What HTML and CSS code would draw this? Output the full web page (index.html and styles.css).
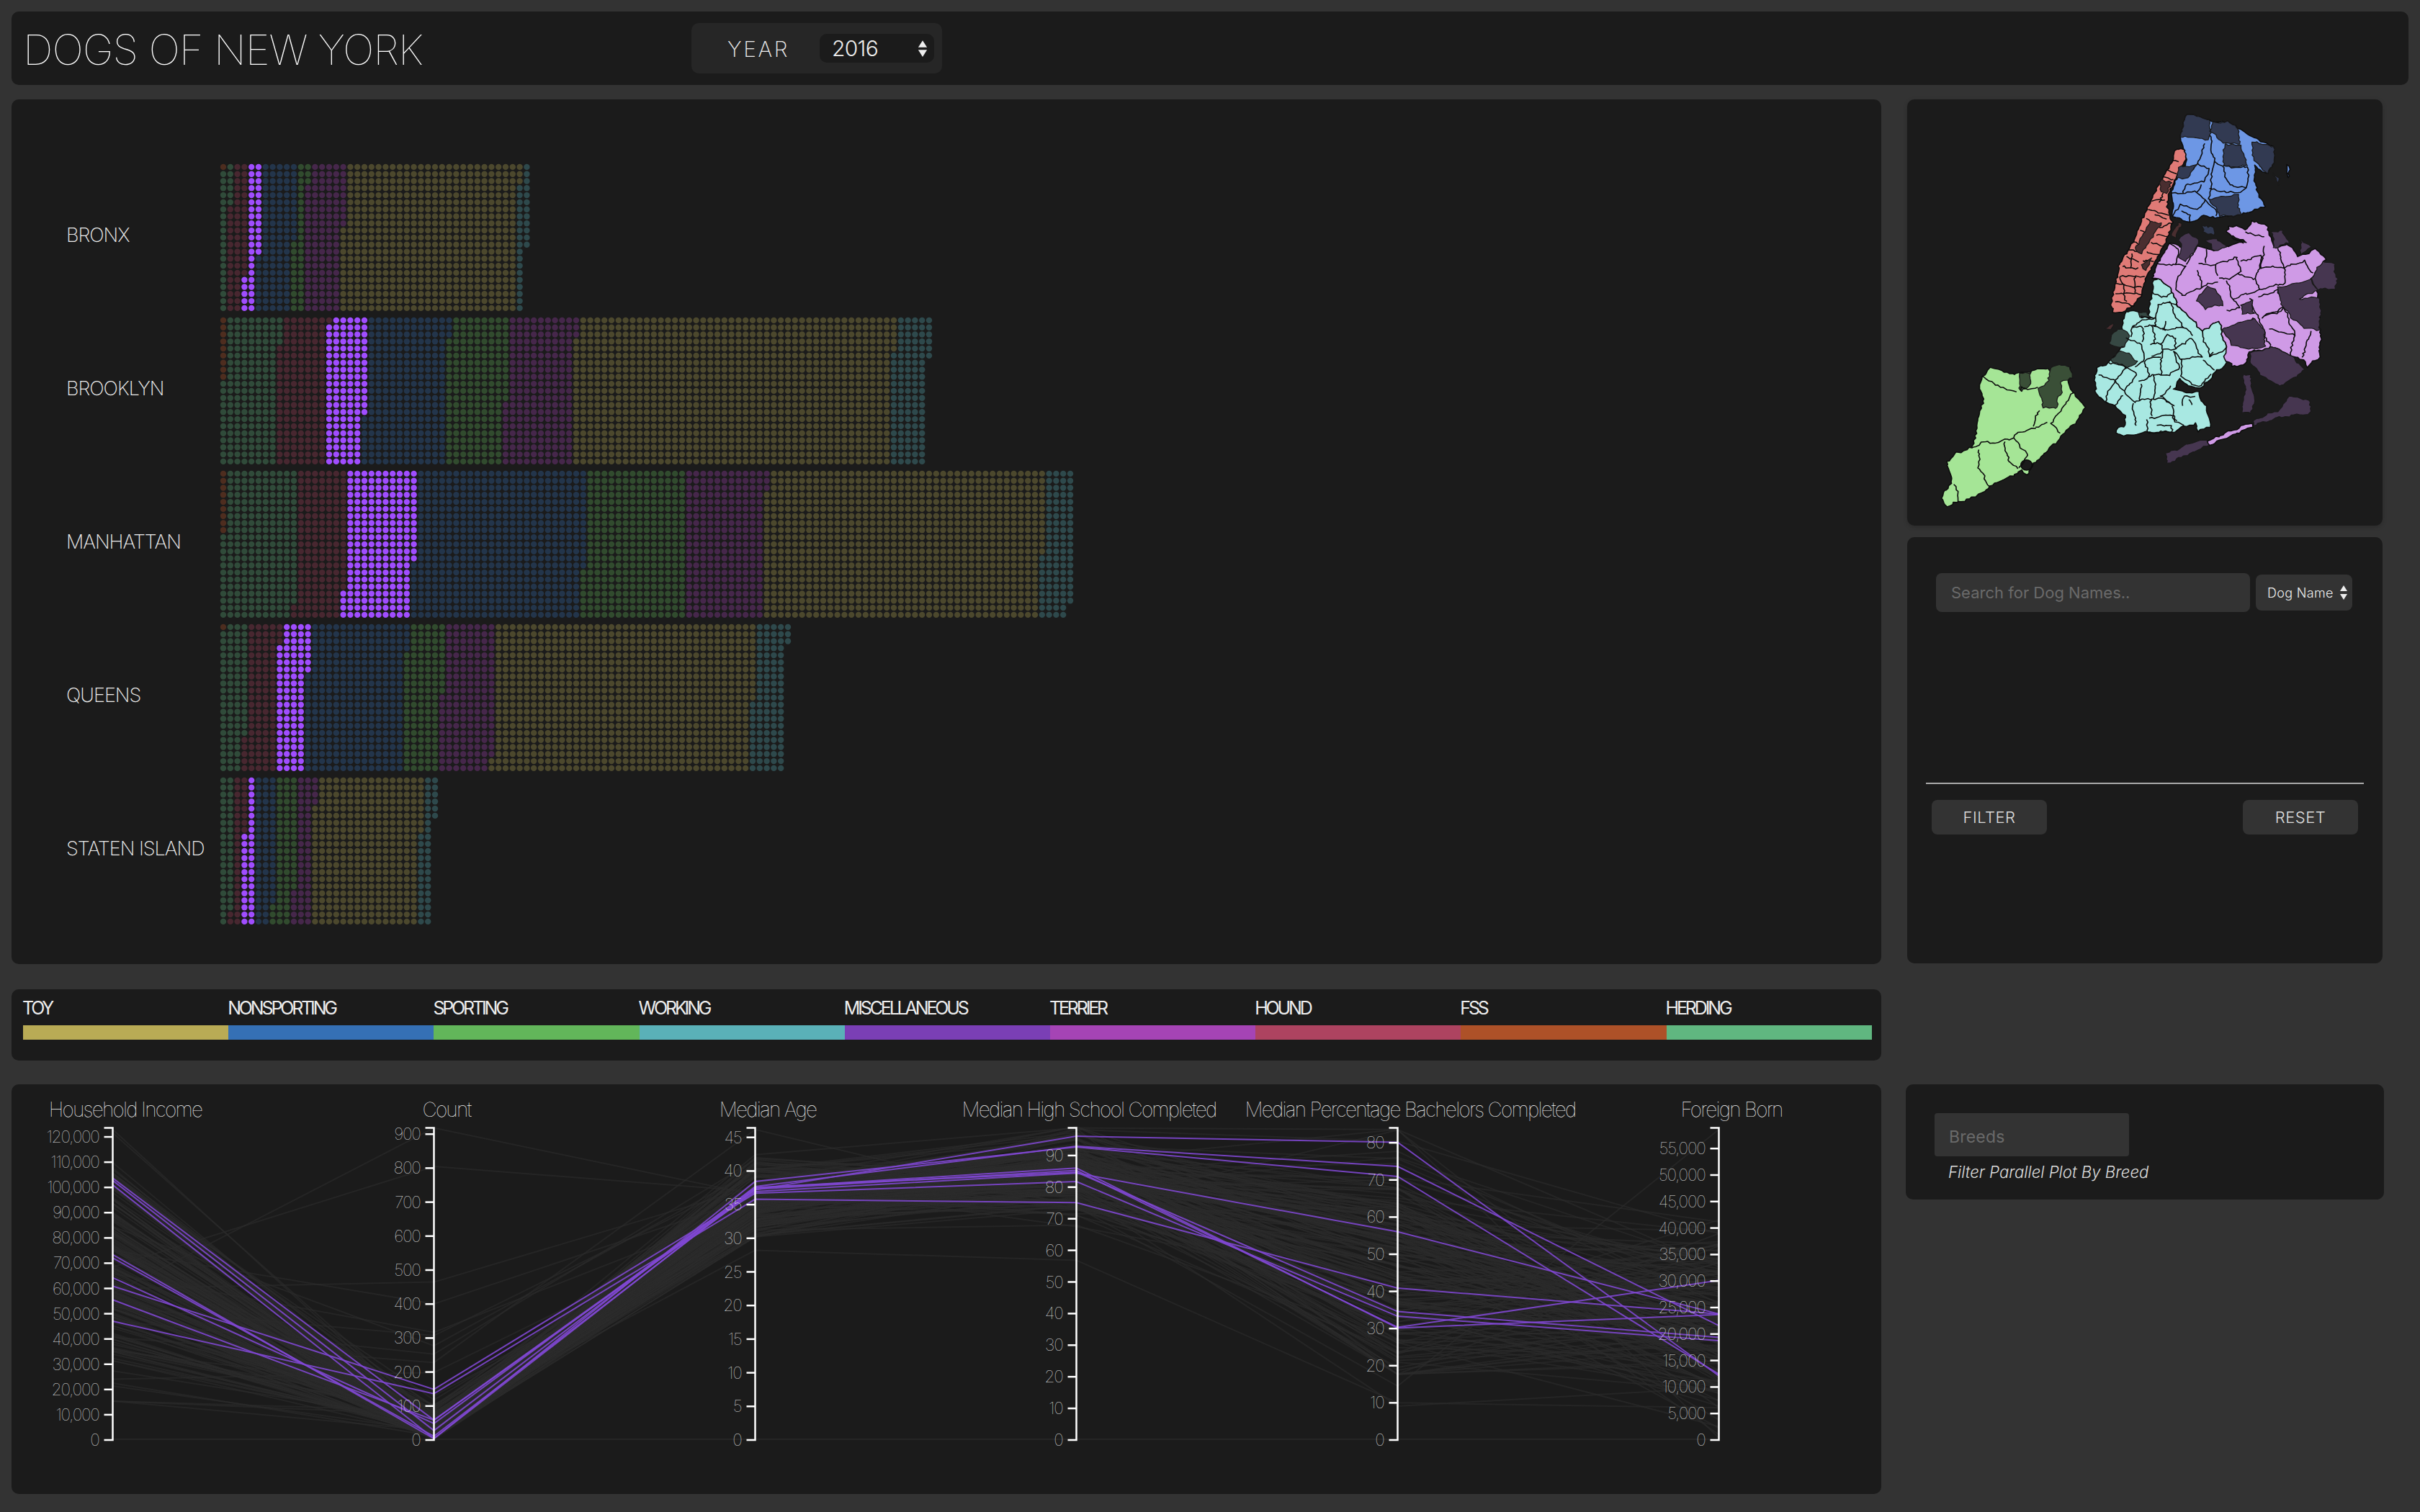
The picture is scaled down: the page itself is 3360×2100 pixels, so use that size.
FILE: index.html
```
<!DOCTYPE html>
<html lang="en">
<head>
<meta charset="utf-8">
<title>Dogs of New York</title>
<link rel="stylesheet" href="styles.css">
</head>
<body>
<header class="panel header">
  <h1 class="title">DOGS OF NEW YORK</h1>
  <div class="year-box">
    <span class="year-label">YEAR</span>
    <div class="select year-select"><span>2016</span>
      <svg class="arrows year-arrows" viewBox="0 0 16 26"><path d="M8 0 15 11H1ZM8 26 1 15H15Z"/></svg>
    </div>
  </div>
</header>
<div class="columns">
  <div class="left">
    <main class="panel dots" id="dots"></main>
    <section class="panel legend" id="legend"></section>
    <section class="panel parallel"><svg id="parallel" class="parallel-svg" viewBox="16 1506 2596 569"></svg></section>
  </div>
  <aside class="right">
    <section class="panel map-panel">
      <svg class="map" viewBox="18 20 1522 1498" preserveAspectRatio="none">
        <g class="map-g" id="map">
          <!-- Staten Island -->
          <path class="si" d="M282 965 300 968 330 975 360 985 410 975 470 965 478 975 510 955 540 960 545 1000 530 1005 548 1050 588 1105 560 1150 520 1190 500 1220 460 1265 420 1300 400 1340 385 1325 340 1350 280 1380 265 1400 215 1425 185 1435 145 1450 128 1420 135 1395 160 1375 155 1335 145 1295 180 1260 225 1245 245 1150 262 1080 250 1030 258 995Z"/>
          <path class="si-d" d="M380 985 412 978 415 1020 385 1050 375 1035ZM480 965 510 952 540 958 545 1000 512 1010 510 1050 495 1075 500 1100 455 1105 440 1040 470 1010Z"/>
          <circle class="hole" cx="400" cy="1305" r="18"/>
          <path class="ln" d="M258 995 300 1025 365 1045M385 1050 380 1035 440 1035M440 1110 425 1165M548 1050 500 1130 480 1160M430 1175 375 1190 360 1210 330 1215 310 1225 265 1225 225 1245M480 1160 510 1195M430 1170 470 1155M245 1250 250 1320 280 1380M330 1225 340 1290 370 1320M360 1210 405 1270 375 1320M170 1375 185 1435"/>
          <!-- Brooklyn -->
          <path class="bk" d="M715 765 755 768 765 785 790 785 800 720 805 655 830 655 865 690 885 745 935 800 960 835 1015 800 1040 900 1040 950 1000 985 985 1010 950 1035 920 1030 890 1005 875 1040 905 1048 950 1050 960 1078 975 1095 990 1170 950 1185 940 1160 905 1170 865 1190 790 1190 710 1205 685 1190 690 1175 720 1165 715 1130 680 1095 650 1085 620 1050 618 1000 630 965 660 945 690 910 715 885 708 825Z"/>
          <path class="bk-d" d="M670 845 705 825 735 850 715 885 690 895 668 880ZM665 940 695 905 725 915 755 945 720 965ZM755 770 785 765 795 785 760 785Z"/>
          <path class="ln" d="M738 850 735 825 765 800 815 785 820 740 865 735 885 745M765 790 815 785 815 815 775 815M740 825 770 815 775 870M775 815 805 815 810 880M810 820 845 830 845 800M838 830 905 820 935 850M860 730 870 770 905 820M715 860 770 880 775 940 745 960M795 880 830 880 835 905 800 925M830 880 850 850 880 860 875 895 835 900M875 895 930 860M870 905 895 930 960 925 930 860M835 905 830 985 790 995 780 935 830 925M870 905 890 960 860 990 830 985M895 930 895 995 950 1030 990 985M965 935 1000 975M1000 910 990 925 1040 895M960 835 990 925M660 945 720 960 685 1010 630 985M720 960 755 990 710 1045 685 1010M685 1010 655 1055 660 1090M710 1045 745 1080 830 1070 870 1100M760 1015 790 995M765 1020 765 1080M810 990 810 1070M708 1060 680 1095M740 1085 750 1170M800 1075 800 1130M790 1140 870 1130 875 1155 905 1165M785 1145 785 1190 865 1188 865 1165 820 1165M865 1100 880 1150M860 1030 830 1065 870 1100M900 1095 905 1065 935 1062M920 1075 930 1098M800 700 830 715 870 700"/>
          <!-- Queens -->
          <path class="qn" d="M1040 490 1050 465 1085 470 1100 480 1120 450 1170 460 1185 525 1200 540 1240 530 1270 575 1325 545 1360 585 1335 610 1310 650 1330 700 1340 810 1340 925 1300 960 1285 935 1250 920 1190 890 1110 910 1100 950 1060 960 1035 930 1040 900 1015 800 960 835 935 800 885 745 865 690 830 655 805 650 820 600 860 525 895 540 935 535 1000 550 1060 530 1105 520 1055 500Z"/>
          <path class="ln" d="M860 525 890 555 880 600 820 600M880 600 910 610 885 640 880 690M915 600 950 535M950 600 1005 600 1010 640M975 550 975 590M1005 600 1075 575 1085 625 1050 650 1015 650M950 620 960 680 1010 660M1085 590 1150 570 1145 620 1135 650 1075 635M1160 535 1150 610 1225 610M1225 610 1205 540M1225 610 1290 590 1315 630M1225 610 1230 665 1145 690 1135 650M1145 690 1060 720 1040 660M1060 720 1085 755 1040 760M960 680 900 710 880 690M1115 720 1160 835 1180 890M1145 715 1205 690 1225 760 1155 785M1155 785 1225 750 1260 850 1180 825M1260 850 1245 920M1310 835 1285 930M1095 830 1125 790 1145 830 1095 845M1060 510 1100 525M1100 490 1160 500"/>
          <path class="qn-d" d="M1350 590 1385 600 1395 650 1385 685 1330 690 1310 650 1330 610ZM1205 680 1310 655 1330 690 1275 720 1340 715 1340 830 1290 825 1250 790 1215 740ZM945 725 980 680 1010 695 1030 740 975 755ZM1115 910 1190 890 1250 920 1290 970 1240 1010 1210 1030 1150 990 1120 950ZM1025 830 1090 800 1130 795 1160 830 1165 890 1110 900 1060 880ZM1090 740 1120 730 1130 770 1090 775ZM850 1265 920 1230 980 1215 985 1235 850 1300ZM1125 1150 1210 1110 1240 1065 1305 1075 1310 1125 1220 1135 1125 1165ZM1095 990 1115 985 1130 1080 1120 1125 1090 1120 1100 1050ZM885 510 920 485 955 520 930 560 905 590 890 570 900 545ZM975 515 1010 510 1040 540 1005 550ZM1185 485 1220 480 1240 525 1195 540ZM1275 515 1310 540 1280 565Z"/>
          <path class="qn" d="M980 1220 1120 1155 1125 1170 985 1235Z"/>
          <!-- Manhattan -->
          <path class="mn" d="M870 200 915 195 905 240 880 290 860 345 850 400 868 450 850 505 780 650 770 710 740 750 680 775 668 745 685 680 695 600 740 520 790 400 840 290 870 235Z"/>
          <path class="ln" d="M870 235 885 240M850 265 880 280M840 290 870 305M805 375 845 375M835 345 825 385M790 410 860 425M810 425 850 445M780 440 810 455M760 480 795 490M740 520 770 530M825 470 868 455M815 495 850 505M800 525 835 535M785 555 825 565M770 585 805 590M725 545 770 560M715 575 760 590M705 605 755 615M700 640 750 645M745 640 775 640M690 670 770 680M685 700 770 705M680 730 745 745M740 560 735 610M700 640 720 730M750 645 745 700"/>
          <path class="mn-d" d="M830 300 860 310 850 350 830 345ZM800 445 830 455 765 565 750 545ZM885 450 900 455 880 505 860 495ZM655 825 680 805 670 830ZM770 600 800 580 780 625Z"/>
          <!-- Bronx -->
          <path class="bx" d="M915 70 985 95 1045 100 1110 145 1195 185 1190 240 1170 280 1130 250 1135 340 1165 395 1140 405 1085 425 1020 435 970 430 920 455 870 430 865 350 885 295 910 240 905 190 890 155Z"/>
          <path class="ln" d="M970 175 945 250 885 295M985 135 1000 240 1025 255M945 250 985 265 965 310 910 320M1030 255 1110 260 1105 330M1000 240 990 330 980 370M1025 255 1050 320 1105 330 1075 350 985 335M910 320 900 350 865 350M900 350 945 345 960 320M945 345 970 375 945 410 895 390 870 430M970 375 1005 410 1010 430M895 410 925 425 920 455"/>
          <path class="bx-d" d="M915 70 985 95 990 135 980 165 935 150 890 155ZM1000 100 1045 100 1080 125 1080 180 1030 170 990 130ZM1035 175 1085 185 1110 255 1030 255ZM1120 170 1195 185 1190 240 1170 280 1130 235ZM985 370 1075 355 1085 425 1020 430ZM885 260 940 250 915 295 880 295ZM960 460 1000 470 1000 495 965 490Z"/>
          <path class="bx" d="M1230 250 1245 260 1240 295Z"/>
          <path class="bx-d" d="M1190 280 1205 300 1205 320Z"/>
        </g>
      </svg>
    </section>
    <section class="panel search">
      <div class="search-row">
        <input class="field search-input" type="text" placeholder="Search for Dog Names..">
        <div class="select name-select"><span>Dog Name</span>
          <svg class="arrows name-arrows" viewBox="0 0 10 20"><path d="M5 0 10 8H0ZM5 20 0 12H10Z"/></svg>
        </div>
      </div>
      <div class="results"></div>
      <hr class="rule">
      <div class="actions"><button class="btn">FILTER</button><button class="btn">RESET</button></div>
    </section>
    <section class="panel breeds">
      <input class="field breed-input" type="text" placeholder="Breeds">
      <p class="breed-note">Filter Parallel Plot By Breed</p>
    </section>
  </aside>
</div>
<script src="app.js"></script>
</body>
</html>
```
FILE: styles.css
```
* { box-sizing: border-box; }
html, body { margin: 0; height: 100%; }
body {
  background: #333;
  padding: 16px;
  color: #eee;
  font-family: Inter, "Noto Sans", sans-serif;
  overflow: hidden;
}
.panel { background: #1b1b1b; border-radius: 10px; }

.header { height: 102px; display: flex; align-items: center; padding-left: 16px; width: 3328px; }
.title { width: 928px; margin: 4px 0 0; font-size: 58px; font-weight: 100; letter-spacing: -1px; color: #fff; white-space: nowrap; }
.year-box { width: 348px; height: 70px; background: #262626; border-radius: 10px; display: flex; align-items: center; padding-left: 50px; }
.year-label { width: 128px; margin-top: 2px; font-size: 30px; font-weight: 200; letter-spacing: 2.6px; color: #eee; }
.select { display: flex; align-items: center; background: #1b1b1b; border-radius: 10px; color: #eee; }
.year-select { width: 159px; height: 40px; padding: 0 9px 0 17px; justify-content: space-between; font-size: 30px; font-weight: 300; letter-spacing: -.7px; }
.arrows { fill: #eee; display: block; }
.year-arrows { width: 14px; height: 25px; }

.columns { display: flex; gap: 36px; margin-top: 20px; }
.left { width: 2596px; }
.right { width: 660px; }

.dots { height: 1201px; padding-top: 85px; }
.borough { display: flex; align-items: center; height: 213px; padding-left: 76px; }
.borough-name { width: 213px; margin-bottom: 7px; font-size: 27px; font-weight: 200; letter-spacing: -1px; color: #eee; white-space: nowrap; }
.borough-dots { width: 1300px; height: 206px; display: block; }
.g-fss { fill: #ad5128; opacity: .35; }
.g-herding { fill: #60b780; opacity: .31; }
.g-hound { fill: #ad4360; opacity: .31; }
.g-misc { fill: #a04dff; }
.g-nonsporting { fill: #3570b5; opacity: .31; }
.g-sporting { fill: #62b65a; opacity: .31; }
.g-terrier { fill: #a544b5; opacity: .31; }
.g-toy { fill: #b9ab55; opacity: .31; }
.g-working { fill: #5ab1b8; opacity: .31; }

.legend { height: 99px; margin-top: 35px; padding: 12px 16px 0; display: grid; grid-template-columns: repeat(9, 285.2px); }
.legend-name { font-size: 25px; font-weight: 400; letter-spacing: -3.15px; line-height: 28px; margin-left: -1px; height: 38px; color: #eee; white-space: nowrap; }
.legend-bar { height: 20px; }
.bar-toy { background: #b9ab55; }
.bar-nonsporting { background: #3570b5; }
.bar-sporting { background: #62b65a; }
.bar-working { background: #5ab1b8; }
.bar-misc { background: #7a3fb5; }
.bar-terrier { background: #a544b5; }
.bar-hound { background: #ad4360; }
.bar-fss { background: #ad5128; }
.bar-herding { background: #60b780; }

.parallel { height: 569px; margin-top: 33px; }
.parallel-svg { display: block; width: 2596px; height: 569px; }
.pc-grey { fill: none; stroke: #2c2c2c; stroke-opacity: .62; stroke-width: 2; }
.pc-purple { fill: none; stroke: #8148d4; stroke-opacity: .88; stroke-width: 2; }
.pc-axis { fill: none; stroke: #fff; stroke-width: 2.5; }
.pc-title { font-family: Inter, sans-serif; font-size: 28px; font-weight: 100; letter-spacing: -1.75px; fill: #f2f2f2; text-anchor: middle; }
.pc-tick { font-family: Inter, sans-serif; font-size: 23px; font-weight: 100; letter-spacing: -1.3px; fill: #ddd; text-anchor: end; }

.map-panel { height: 592px; box-shadow: 0 2px 6px rgba(0,0,0,.2); }
.map { display: block; width: 660px; height: 592px; }
.map-g path, .map-g circle { stroke: #0d0d0d; stroke-width: 3.8; stroke-linejoin: round; }
.ln { fill: none; }
.si { fill: #a5e596; }
.bk { fill: #a8e8e2; }
.qn { fill: #cf9ae6; }
.mn { fill: #e07a76; }
.bx { fill: #6d97e5; }
.map-g .si-d { fill: #3a4f37; stroke: #1a1a1a; stroke-width: 3; }
.map-g .bk-d { fill: #364843; stroke: #1a1a1a; stroke-width: 3; }
.map-g .qn-d { fill: #463650; stroke: #1a1a1a; stroke-width: 3; }
.map-g .mn-d { fill: #4a2e30; stroke: #1a1a1a; stroke-width: 3; }
.map-g .bx-d { fill: #323a52; stroke: #1a1a1a; stroke-width: 3; }
.hole { fill: #1b1b1b; }

.search { height: 592px; margin-top: 16px; padding: 50px 26px 0; }
.search-row { display: flex; align-items: center; gap: 8px; padding: 0 14px; height: 54px; }
.field { background: #333; border: 0; border-radius: 8px; color: #eee; font-family: Inter, sans-serif; outline: 0; }
.field::placeholder { color: #6a6a6a; opacity: 1; }
.search-input { width: 436px; height: 54px; padding-left: 21px; font-size: 22px; font-weight: 400; letter-spacing: 0; }
.name-select { width: 134px; height: 50px; background: #333; border-radius: 8px; padding: 0 7px 0 16px; justify-content: space-between; font-size: 18px; font-weight: 300; letter-spacing: .3px; white-space: nowrap; }
.name-arrows { width: 10px; height: 20px; }
.results { height: 237px; }
.rule { margin: 0; border: 0; height: 2px; background: #aaa; }
.actions { display: flex; justify-content: space-between; padding: 22px 8px 0; }
.btn { width: 160px; height: 48px; background: #333; border: 0; border-radius: 8px; color: #ddd; font-family: Inter, sans-serif; font-size: 22px; font-weight: 300; letter-spacing: .5px; }

.breeds { width: 664px; height: 160px; margin: 168px 0 0 -2px; padding: 40px 40px 0; }
.breed-input { display: block; width: 270px; height: 60px; padding: 6px 0 0 20px; border-radius: 4px; font-size: 23px; font-weight: 400; letter-spacing: .2px; }
.breed-note { margin: 8px 0 0 19px; font-size: 22.2px; font-weight: 300; font-style: italic; color: #ddd; white-space: nowrap; }
```
FILE: app.js
```
// Dot matrix: each borough fills columns top-down, alphabetically by breed group.
var GROUPS = ['fss', 'herding', 'hound', 'misc', 'nonsporting', 'sporting', 'terrier', 'toy', 'working'];
var BOROUGHS = [
  { name: 'BRONX',         ends: [[0,1],[1,6],[3,16],[5,13],[10,11],[12,3],[17,9],[42,3],[43,12]] },
  { name: 'BROOKLYN',      ends: [[0,9],[8,4],[15,1],[20,14],[32,3],[40,12],[50,3],[95,5],[100,6]] },
  { name: 'MANHATTAN',     ends: [[0,9],[10,19],[17,17],[27,13],[51,14],[66,0],[77,3],[116,12],[120,19]] },
  { name: 'QUEENS',        ends: [[0,1],[3,16],[8,3],[12,7],[26,4],[31,10],[38,19],[75,11],[80,3]] },
  { name: 'STATEN ISLAND', ends: [[0,0],[1,19],[3,8],[5,0],[7,18],[10,16],[13,4],[28,8],[30,6]] }
];
var NS = 'http://www.w3.org/2000/svg';
function el(name, attrs, text) {
  var n = document.createElementNS(NS, name);
  for (var k in attrs) n.setAttribute(k, attrs[k]);
  if (text !== undefined) n.textContent = text;
  return n;
}

var dots = document.getElementById('dots');
BOROUGHS.forEach(function (b) {
  var row = document.createElement('div');
  row.className = 'borough';
  var label = document.createElement('div');
  label.className = 'borough-name';
  label.textContent = b.name;
  row.appendChild(label);
  var svg = el('svg', { 'class': 'borough-dots', viewBox: '0 0 1300 206' });
  var start = 0;
  b.ends.forEach(function (end, g) {
    var stop = end[0] * 21 + end[1];
    var grp = el('g', { 'class': 'g-' + GROUPS[g] });
    for (var i = start; i < stop; i++) {
      var col = Math.floor(i / 21), r = i % 21;
      grp.appendChild(el('circle', { cx: (5 + col * 9.8).toFixed(1), cy: (4.9 + r * 9.8).toFixed(1), r: 4.2 }));
    }
    svg.appendChild(grp);
    start = stop;
  });
  row.appendChild(svg);
  dots.appendChild(row);
});

// Legend
var LEGEND = [['TOY','toy'],['NONSPORTING','nonsporting'],['SPORTING','sporting'],['WORKING','working'],['MISCELLANEOUS','misc'],['TERRIER','terrier'],['HOUND','hound'],['FSS','fss'],['HERDING','herding']];
var legend = document.getElementById('legend');
LEGEND.forEach(function (l) {
  var c = document.createElement('div');
  var n = document.createElement('div');
  n.className = 'legend-name';
  n.textContent = l[0];
  var b = document.createElement('div');
  b.className = 'legend-bar bar-' + l[1];
  c.appendChild(n);
  c.appendChild(b);
  legend.appendChild(c);
});

// Map: roughen the simplified borders with a continuous displacement field,
// so that borders shared by two shapes stay together.
function wob(x, y) {
  return [
    2.6 * Math.sin(x * 0.13 + y * 0.07) + 1.8 * Math.sin(y * 0.37 - x * 0.19) + 1.1 * Math.sin(x * 0.71 + y * 0.53),
    2.6 * Math.sin(y * 0.11 - x * 0.09) + 1.8 * Math.sin(x * 0.41 + y * 0.23) + 1.1 * Math.sin(y * 0.67 - x * 0.59)
  ];
}
function roughen(d) {
  var out = [];
  d.match(/M[^MZ]*Z?/g).forEach(function (sub) {
    var nums = sub.match(/-?\d+(\.\d+)?/g).map(Number), closed = /Z/.test(sub), pts = [];
    for (var i = 0; i < nums.length; i += 2) pts.push([nums[i], nums[i + 1]]);
    if (closed) pts.push(pts[0]);
    var s = '';
    for (var j = 0; j < pts.length - 1; j++) {
      var a = pts[j], b = pts[j + 1];
      var n = Math.max(1, Math.round(Math.hypot(b[0] - a[0], b[1] - a[1]) / 9));
      for (var k = j === 0 ? 0 : 1; k <= n; k++) {
        var x = a[0] + (b[0] - a[0]) * k / n, y = a[1] + (b[1] - a[1]) * k / n, w = wob(x, y);
        s += (s ? 'L' : 'M') + (x + w[0]).toFixed(1) + ' ' + (y + w[1]).toFixed(1);
      }
    }
    out.push(s + (closed ? 'Z' : ''));
  });
  return out.join('');
}
Array.prototype.forEach.call(document.querySelectorAll('#map path'), function (p) {
  p.setAttribute('d', roughen(p.getAttribute('d')));
});

// Parallel coordinates. Values are given in the plot's own vertical units.
var pc = document.getElementById('parallel');
var TOP = 1566.5, BOTTOM = 2000;
var AXES = [
  { x: 156.5,  title: 'Household Income', step: 10000, n: 12, px: 35.08, comma: true },
  { x: 602.5,  title: 'Count', step: 100, n: 9, px: 47.2 },
  { x: 1048.5, title: 'Median Age', step: 5, n: 9, px: 46.7 },
  { x: 1494.5, title: 'Median High School Completed', step: 10, n: 9, px: 43.9 },
  { x: 1940.5, title: 'Median Percentage Bachelors Completed', step: 10, n: 8, px: 51.6 },
  { x: 2386.5, title: 'Foreign Born', step: 5000, n: 11, px: 36.8, comma: true }
];
function Y(z) { return 1350 + z / 2.148; }
var seed = 12345;
function rnd() { seed = (seed * 16807) % 2147483647; return seed / 2147483647; }
function gauss(m, s, lo, hi) {
  var v = m + s * (rnd() + rnd() + rnd() + rnd() - 2) * 1.7;
  return Math.max(lo, Math.min(hi, v));
}
function line(zs, cls) {
  var pts = zs.map(function (z, i) { return AXES[i].x + ',' + Y(z).toFixed(1); }).join(' ');
  pc.appendChild(el('polyline', { 'class': cls, points: pts }));
}
// background records
for (var i = 0; i < 170; i++) {
  var hh = gauss(850, 190, 470, 1280);
  var cnt = 1394 - (-Math.log(1 - rnd() * 0.97) * 38);
  var age = gauss(680, 58, 500, 790);
  var hs = gauss(595, 65, 462, 760);
  var ba = gauss(880, 190, 470, 1200);
  var fb = gauss(1040, 130, 740, 1380);
  line([hh, cnt, age, hs, ba, fb], 'pc-grey');
}
// the records that stand out from the bundle
[
  [960,465,665,520,700,1060],[880,580,655,560,800,1040],[945,925,640,600,900,1010],
  [830,990,670,540,780,1130],[900,1075,700,610,950,1090],[1000,1085,610,580,1010,900],
  [760,1115,590,500,850,1100],[1040,1140,560,640,1180,1000],[1090,1165,470,700,1235,470],
  [1215,1195,725,660,1295,1240],[1130,1250,770,755,1100,1250],[1190,1340,830,860,1285,1300],
  [1235,1370,760,640,1120,1150],[1160,1360,740,470,505,780],[480,1330,545,465,470,1390],
  [1394,1394,1394,1394,1394,1394]
].forEach(function (z) { line(z, 'pc-grey'); });
[
  [615,1337,650,490,508,1205],[622,1368,640,520,580,1055],[635,1392,625,522,610,1200],
  [843,1392,645,585,1062,1022],[853,1385,648,592,1060,920],[912,1347,643,597,1013,1090],
  [937,1245,660,625,1027,1100],[978,1337,655,600,775,1020],[1042,1258,678,688,943,1020]
].forEach(function (z) { line(z, 'pc-purple'); });

AXES.forEach(function (a) {
  pc.appendChild(el('path', { 'class': 'pc-axis', d: 'M' + (a.x - 12) + ' ' + TOP + 'H' + a.x + 'V' + BOTTOM + 'H' + (a.x - 12) }));
  pc.appendChild(el('text', { 'class': 'pc-title', x: a.x + 17.5, y: 1551 }, a.title));
  for (var t = 0; t <= a.n; t++) {
    var y = BOTTOM - t * a.px;
    if (t) pc.appendChild(el('path', { 'class': 'pc-axis', d: 'M' + (a.x - 12) + ' ' + y + 'H' + a.x }));
    var v = t * a.step;
    pc.appendChild(el('text', { 'class': 'pc-tick', x: a.x - 19, y: y + 8 }, a.comma ? v.toLocaleString('en-US') : String(v)));
  }
});
```
